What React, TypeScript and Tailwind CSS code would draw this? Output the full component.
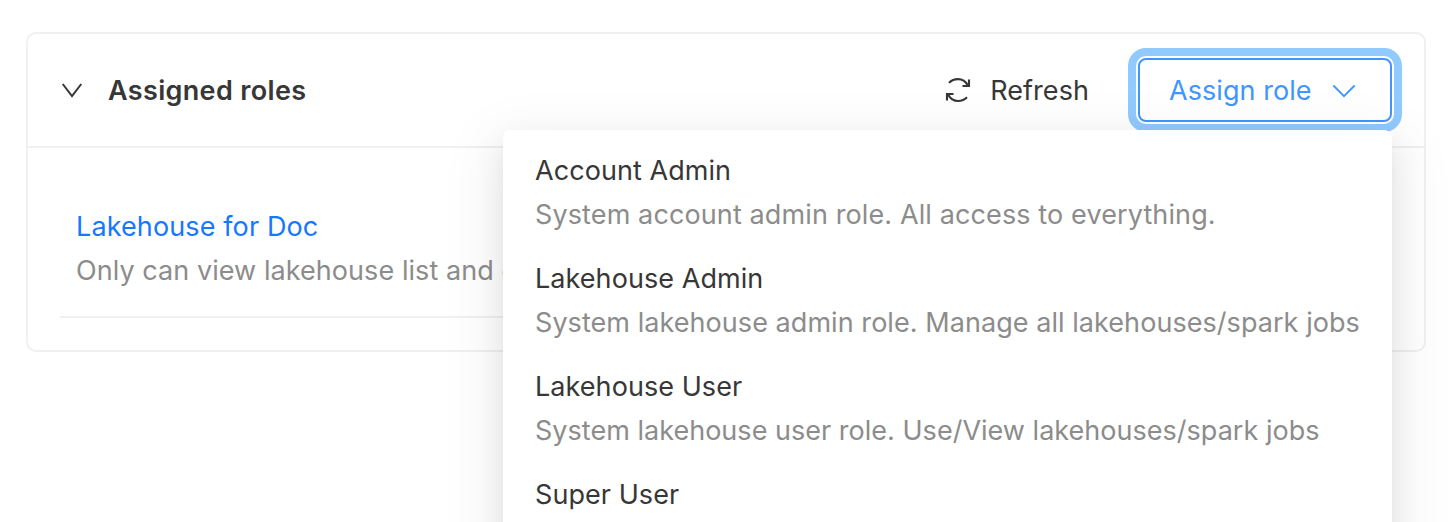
type Role = { name: string; description?: string; tracking?: string };

const availableRoles: Role[] = [
  {
    name: "Account Admin",
    description: "System account admin role. All access to everything.",
    tracking: "tracking-[0.115px]",
  },
  {
    name: "Lakehouse Admin",
    description: "System lakehouse admin role. Manage all lakehouses/spark jobs",
    tracking: "tracking-[0.055px]",
  },
  {
    name: "Lakehouse User",
    description: "System lakehouse user role. Use/View lakehouses/spark jobs",
    tracking: "tracking-[0.02px]",
  },
  { name: "Super User" },
];

function CollapseIcon() {
  return (
    <svg viewBox="0 0 24 24" className="size-6" fill="none" stroke="currentColor" strokeWidth="2">
      <path d="M2.7 6 12 18 21.3 6" />
    </svg>
  );
}

function DownIcon() {
  return (
    <svg viewBox="0 0 24 24" className="size-6" fill="none" stroke="currentColor" strokeWidth="1.8">
      <path d="M1.400 7.500 12 18.200 22.600 7.500" />
    </svg>
  );
}

function RefreshIcon() {
  return (
    <svg viewBox="0 0 28 28" className="size-7" fill="none" stroke="currentColor" strokeWidth="2.1">
      <path d="M5 6.900C7.500 4.200 10.500 3.100 14 3.100c4.200 0 7.500 2 9.600 6" />
      <path d="M25 3.500V10H18.500" />
      <path d="M23 21.300C20.500 23.900 17.500 25 14 25c-4.200 0-7.500-2-9.600-6" />
      <path d="M3 24.500V18H9.500" />
    </svg>
  );
}

function RoleMenu() {
  return (
    <ul className="absolute top-[72px] right-0 z-10 h-[480px] w-[889px] rounded-lg bg-white py-2 shadow-[0_12px_32px_0_rgba(0,0,0,0.08),0_6px_12px_-8px_rgba(0,0,0,0.12),0_18px_56px_16px_rgba(0,0,0,0.05)]">
      {availableRoles.map((role) => (
        <li key={role.name} className="px-8 pt-[11px] pb-[9px] whitespace-nowrap">
          <div>{role.name}</div>
          {role.description && (
            <div className={`text-[#8c8c8c] ${role.tracking ?? ""}`}>{role.description}</div>
          )}
        </li>
      ))}
    </ul>
  );
}

export default function App() {
  return (
    <main className="h-[522px] overflow-hidden bg-white px-[26px] pt-8 font-['Inter',sans-serif] text-[27px] leading-[44px] tracking-[0.06px] text-[#373737]">
      <section className="h-80 rounded-[10px] border-2 border-[#f0f0f0]">
        <header className="flex h-[114px] items-center border-b-2 border-[#f0f0f0] px-8">
          <CollapseIcon />
          <h2 className="ml-6 pt-0.5 font-semibold tracking-[0.34px]">Assigned roles</h2>
          <button className="ml-auto flex items-center gap-[18px]">
            <RefreshIcon />
            <span className="pt-0.5">Refresh</span>
          </button>
          <div className="relative ml-[49px]">
            <button className="flex h-16 w-[254px] items-center justify-between rounded-lg border-2 border-[#4096ff] pr-[34px] pl-[29px] text-[#4096ff] outline-8 outline-offset-2 outline-[#91caff]">
              <span className="pt-0.5">Assign role</span>
              <DownIcon />
            </button>
            <RoleMenu />
          </div>
        </header>
        <div className="px-8 pt-14">
          <div className="h-[114px] border-b-2 border-[#f0f0f0] px-4 pt-px whitespace-nowrap">
            <a className="block tracking-[0.12px] text-[#1677ff]">Lakehouse for Doc</a>
            <p className="text-[#8c8c8c]">Only can view lakehouse list and details</p>
          </div>
        </div>
      </section>
    </main>
  );
}
